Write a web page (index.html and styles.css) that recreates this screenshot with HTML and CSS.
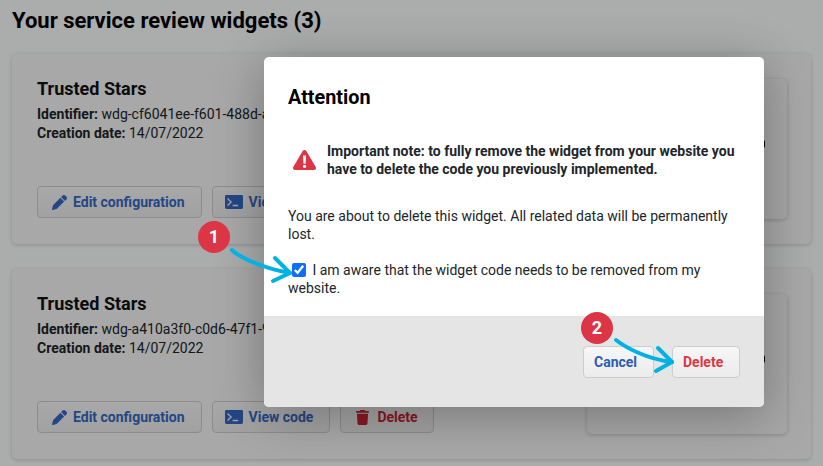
FILE: index.html
```html
<!DOCTYPE html>
<html lang="en">
<head>
<meta charset="utf-8">
<title>Your service review widgets</title>
<link rel="stylesheet" href="styles.css">
</head>
<body>
<main class="page">
  <h1 class="page-title">Your service review widgets (3)</h1>
  <section class="card">
    <div class="card-main">
      <h2 class="card-title">Trusted Stars</h2>
      <p class="meta"><b>Identifier:</b> wdg-cf6041ee-f601-488d-a7c2-91d3b6e05f14</p>
      <p class="meta"><b>Creation date:</b> 14/07/2022</p>
      <div class="actions">
        <button class="btn btn-blue"><svg class="ico-pen" viewBox="0 0 512 512"><path d="M362 19 311 70l131 131 51-51c25-25 25-66 0-91l-40-40c-25-25-66-25-91 0zM288 93 48 333c-6 6-11 14-13 22L1 480c-2 8 0 16 6 22s14 8 22 6l125-34c8-2 16-7 22-13l240-240z"/></svg>Edit configuration</button>
        <button class="btn btn-blue btn-code"><svg class="ico-code" viewBox="0 0 26 20"><path fill-rule="evenodd" d="M2 0h22a2 2 0 0 1 2 2v16a2 2 0 0 1-2 2H2a2 2 0 0 1-2-2V2a2 2 0 0 1 2-2zm2.200 4.200L3 5.600 7.400 10 3 14.400l1.400 1.400L10.200 10zM11 14v2h8v-2z"/></svg>View code</button>
        <button class="btn btn-red"><svg class="ico-trash" viewBox="0 0 448 512"><path d="M135 18 128 32H32a32 32 0 0 0 0 64h384a32 32 0 0 0 0-64h-96l-7-14C308 7 297 0 284 0H164c-13 0-24 7-29 18zM416 128H32l21 339c2 25 23 45 48 45h246c25 0 46-20 48-45z"/></svg>Delete</button>
      </div>
    </div>
    <aside class="preview"><span class="preview-mark"></span></aside>
  </section>
  <section class="card">
    <div class="card-main">
      <h2 class="card-title">Trusted Stars</h2>
      <p class="meta"><b>Identifier:</b> wdg-a410a3f0-c0d6-47f1-9e2b-6d8c41f7a032</p>
      <p class="meta"><b>Creation date:</b> 14/07/2022</p>
      <div class="actions">
        <button class="btn btn-blue"><svg class="ico-pen" viewBox="0 0 512 512"><path d="M362 19 311 70l131 131 51-51c25-25 25-66 0-91l-40-40c-25-25-66-25-91 0zM288 93 48 333c-6 6-11 14-13 22L1 480c-2 8 0 16 6 22s14 8 22 6l125-34c8-2 16-7 22-13l240-240z"/></svg>Edit configuration</button>
        <button class="btn btn-blue btn-code"><svg class="ico-code" viewBox="0 0 26 20"><path fill-rule="evenodd" d="M2 0h22a2 2 0 0 1 2 2v16a2 2 0 0 1-2 2H2a2 2 0 0 1-2-2V2a2 2 0 0 1 2-2zm2.200 4.200L3 5.600 7.400 10 3 14.400l1.400 1.400L10.200 10zM11 14v2h8v-2z"/></svg>View code</button>
        <button class="btn btn-red"><svg class="ico-trash" viewBox="0 0 448 512"><path d="M135 18 128 32H32a32 32 0 0 0 0 64h384a32 32 0 0 0 0-64h-96l-7-14C308 7 297 0 284 0H164c-13 0-24 7-29 18zM416 128H32l21 339c2 25 23 45 48 45h246c25 0 46-20 48-45z"/></svg>Delete</button>
      </div>
    </div>
    <aside class="preview"><span class="preview-mark"></span></aside>
  </section>
</main>

<div class="backdrop"></div>

<div class="modal">
  <div class="modal-body">
    <h2 class="modal-title">Attention</h2>
    <div class="note">
      <svg class="warn" viewBox="0 0 24 22" preserveAspectRatio="none"><path fill="#dc3545" d="M12 0c.8 0 1.500.4 1.900 1.100l9.800 17.600c.8 1.500-.2 3.300-1.900 3.300H2.200C.5 22-.5 20.200.3 18.700L10.100 1.100C10.500.4 11.200 0 12 0z"/><path fill="#fff" d="M10.400 6h3.200l-.5 9h-2.200zM12 16.200a1.800 1.800 0 1 1 0 3.600 1.800 1.800 0 0 1 0-3.600z"/></svg>
      <strong class="note-text">Important note: to fully remove the widget from your website you have to delete the code you previously implemented.</strong>
    </div>
    <p class="warning-copy">You are about to delete this widget. All related data will be permanently lost.</p>
    <label class="confirm"><input class="check" type="checkbox" checked> I am aware that the widget code needs to be removed from my website.</label>
  </div>
  <div class="modal-footer">
    <button class="mbtn mbtn-cancel">Cancel</button>
    <button class="mbtn mbtn-delete">Delete</button>
  </div>
</div>

<svg class="annotations" viewBox="0 0 823 466">
  <g fill="none" stroke="#00b2e3" stroke-width="4" stroke-linecap="round" stroke-linejoin="round">
    <path d="M232 250c7 7 30 18 58 23"/>
    <path d="M275 258l15 15-17 8"/>
    <path d="M616 340c9 7 30 19 56 22"/>
    <path d="M658 348l14 14-16 9"/>
  </g>
</svg>
<div class="badge badge-1">1</div>
<div class="badge badge-2">2</div>
</body>
</html>
```
FILE: styles.css
```css
* { box-sizing: border-box; }
html, body { margin: 0; height: 466px; overflow: hidden; }
body {
  font-family: Roboto, "Liberation Sans", sans-serif;
  font-size: 14px;
  line-height: 18px;
  color: #212529;
  background: #f8f9fa;
  position: relative;
}
.page { padding: 9px 12px 0; }
.page-title {
  margin: 0 0 21px;
  font-size: 22px;
  line-height: 24px;
  font-weight: 700;
  color: #000;
}
.card {
  height: 190px;
  margin-bottom: 25px;
  padding: 25px 24px 25px 25px;
  display: flex;
  justify-content: space-between;
  background: #f4f4f4;
  border-radius: 5px;
  box-shadow: 0 1px 4px rgba(0,0,0,.18);
}
.card-main { display: flex; flex-direction: column; flex: 1; min-width: 0; }
.card-title {
  margin: 0 0 6px;
  font-size: 18px;
  line-height: 20px;
  font-weight: 700;
  color: #111;
}
.meta { margin: 0; line-height: 19px; white-space: nowrap; }
.meta b { font-weight: 700; }
.actions { display: flex; gap: 10px; margin-top: auto; margin-bottom: 1px; }
.btn {
  height: 32px;
  padding: 0 16px 0 14px;
  display: inline-flex;
  align-items: center;
  gap: 6px;
  background: linear-gradient(#f4f4f4, #eaeaea);
  border: 1px solid #cbcbcb;
  border-radius: 4px;
  font: 700 14px Roboto, sans-serif;
  white-space: nowrap;
}
.btn-blue { color: #3468c0; }
.btn-red { color: #c82333; gap: 8px; padding: 0 15px; }
.btn-code { padding-left: 12px; }
.btn svg { fill: currentColor; flex: none; }
.ico-pen { width: 15px; height: 15px; }
.ico-code { width: 18px; height: 14px; }
.ico-trash { width: 13px; height: 17px; }
.preview {
  flex: none;
  width: 200px;
  height: 140px;
  padding-right: 22px;
  display: flex;
  align-items: center;
  justify-content: flex-end;
  background: #f2f2f2;
  border-radius: 5px;
  box-shadow: 0 1px 4px rgba(0,0,0,.2);
}
.preview-mark {
  width: 4px;
  height: 8px;
  margin-bottom: 10px;
  border-radius: 2px;
  background: #000;
}
.backdrop {
  position: absolute;
  inset: 0;
  background: rgba(0,0,0,.31);
}
.modal {
  position: absolute;
  left: 264px;
  top: 57px;
  width: 500px;
  height: 350px;
  display: flex;
  flex-direction: column;
  background: #fff;
  border-radius: 5px;
  overflow: hidden;
  box-shadow: 0 8px 50px rgba(0,0,0,.3);
}
.modal-body { height: 259px; padding: 29px 24px 0; flex: none; }
.modal-title {
  margin: 0 0 32px;
  font-size: 19.800px;
  line-height: 24px;
  font-weight: 700;
  color: #000;
}
.note { display: flex; align-items: center; gap: 11px; margin-bottom: 29px; padding-left: 5px; }
.warn { width: 23px; height: 20px; flex: none; }
.note-text { font-weight: 700; }
.warning-copy { margin: 0 0 18px; }
.confirm { display: block; }
.check {
  width: 14px;
  height: 14px;
  margin: 0 3px 0 4px;
  vertical-align: -2px;
  accent-color: #0d6efd;
}
.modal-footer {
  flex: 1;
  display: flex;
  justify-content: flex-end;
  align-items: flex-start;
  gap: 18px;
  padding: 30px 24px 0;
  background: #e5e5e5;
}
.mbtn {
  height: 32px;
  padding: 0 10px;
  background: linear-gradient(#f6f6f6, #ececec);
  border: 1px solid #cdcdcd;
  border-radius: 4px;
  font: 700 14px Roboto, sans-serif;
  text-align: left;
}
.mbtn-cancel { width: 71px; color: #2c5cb5; }
.mbtn-delete { width: 68px; color: #dc3545; }
.annotations { position: absolute; inset: 0; width: 823px; height: 466px; pointer-events: none; }
.badge {
  position: absolute;
  width: 32px;
  height: 32px;
  border-radius: 50%;
  background: #dc3545;
  color: #fff;
  font-size: 18px;
  font-weight: 700;
  line-height: 32px;
  text-align: center;
}
.badge-1 { left: 198px; top: 221px; }
.badge-2 { left: 581px; top: 312px; }
```
